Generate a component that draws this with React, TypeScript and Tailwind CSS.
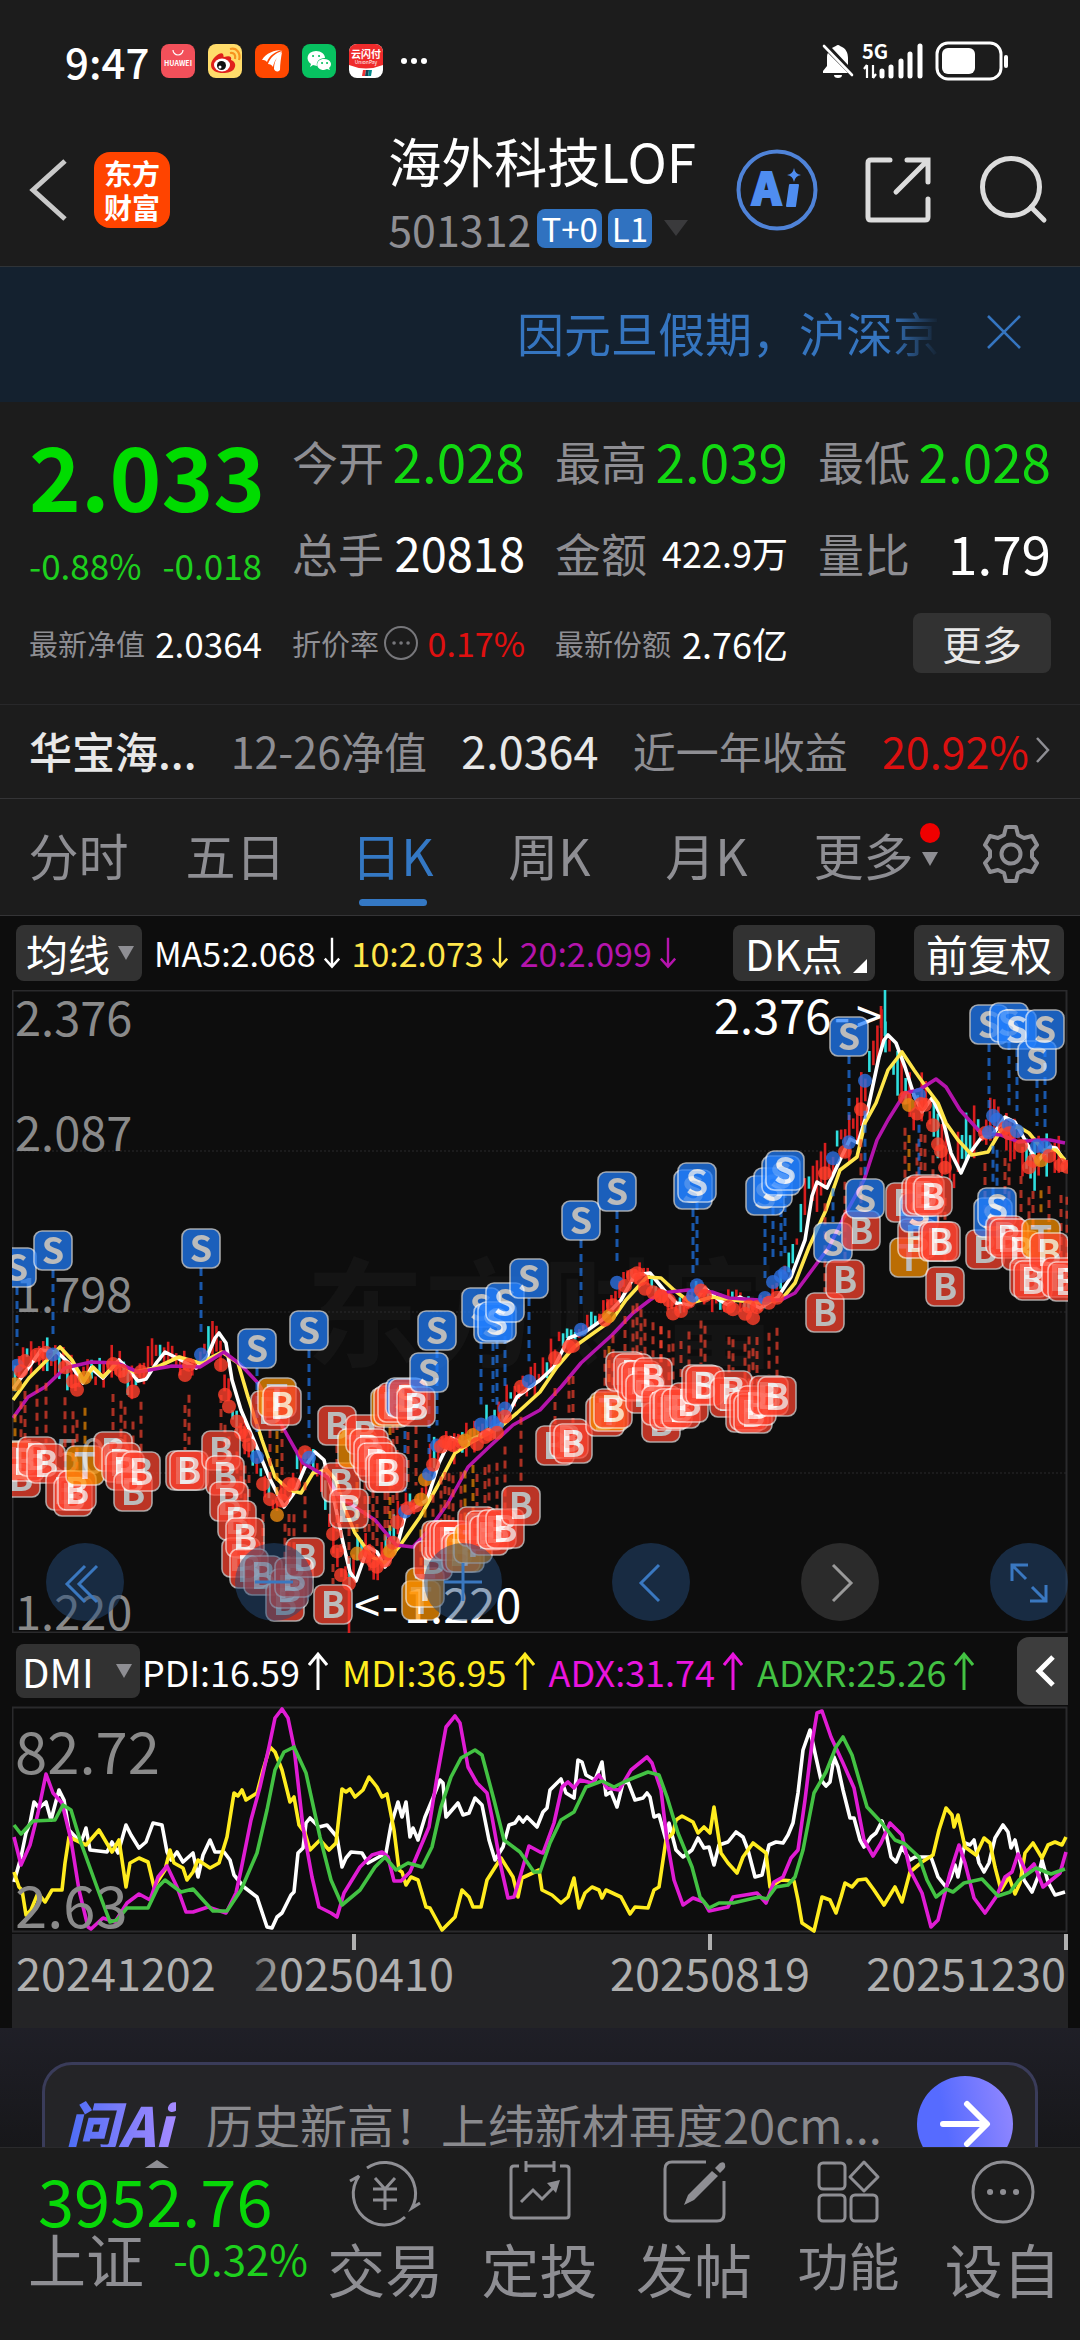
import type { ReactNode } from 'react';

type Point = [number, number];

const toPoints = (s: string): Point[] =>
  s.split(' ').map((p) => p.split(',').map(Number) as Point);

// moving averages
const MA5 = '13,1389 29,1367 41,1350 57,1352 71,1365 83,1383 91,1368 103,1378 119,1360 129,1370 138,1381 146,1379 157,1362 165,1352 177,1358 196,1368 207,1357 215,1338 219,1333 226,1343 232,1380 241,1410 255,1443 269,1477 284,1507 294,1493 305,1467 315,1452 324,1460 334,1500 344,1547 350,1572 356,1581 368,1547 377,1552 385,1567 396,1550 406,1513 427,1500 439,1463 451,1438 463,1443 477,1437 492,1428 504,1422 517,1397 540,1380 554,1367 569,1338 585,1332 602,1320 621,1300 635,1275 650,1273 664,1290 676,1303 691,1305 705,1288 719,1300 728,1305 740,1297 760,1308 778,1297 791,1277 805,1240 812,1196 817,1182 827,1188 840,1160 850,1139 858,1143 867,1113 879,1057 884,1040 888,1035 896,1043 905,1067 914,1095 922,1112 932,1098 943,1120 951,1153 961,1173 970,1153 981,1138 994,1133 1005,1117 1015,1122 1025,1140 1037,1162 1050,1147 1056,1148 1065,1162';
const MA10 = '13,1400 29,1378 45,1362 60,1347 72,1360 84,1381 93,1367 103,1377 117,1363 134,1372 155,1368 179,1357 200,1363 222,1352 238,1363 248,1397 262,1440 275,1477 289,1490 301,1493 313,1473 327,1470 336,1480 344,1507 355,1533 372,1557 384,1563 399,1547 420,1517 437,1487 455,1453 472,1442 499,1428 517,1413 540,1392 557,1367 574,1347 595,1332 612,1320 626,1300 647,1277 661,1278 674,1290 691,1303 712,1297 733,1300 760,1303 781,1300 795,1283 809,1247 826,1210 840,1170 857,1157 865,1123 876,1103 888,1070 902,1052 914,1070 926,1087 938,1103 946,1123 958,1140 972,1155 988,1152 1001,1130 1019,1127 1029,1133 1043,1150 1056,1150 1065,1160';
const MA20 = '13,1418 28,1397 45,1387 65,1368 91,1362 117,1363 138,1372 172,1366 200,1367 224,1352 241,1365 258,1383 272,1407 286,1433 303,1463 327,1477 339,1497 355,1507 375,1520 396,1545 413,1547 429,1530 448,1503 468,1467 489,1447 513,1425 540,1410 561,1387 581,1363 612,1335 633,1313 650,1300 661,1293 688,1290 712,1292 729,1298 760,1300 781,1300 795,1293 812,1270 829,1247 846,1213 864,1180 877,1140 888,1120 905,1093 919,1090 936,1079 946,1087 960,1110 981,1133 1001,1135 1019,1142 1036,1140 1050,1140 1065,1143';

// DMI
const PDI = '14,1882 21,1857 26,1833 30,1823 34,1802 39,1808 46,1802 51,1820 59,1790 64,1800 69,1830 81,1843 86,1828 90,1850 107,1852 112,1842 118,1853 126,1825 131,1835 139,1848 146,1842 153,1823 162,1825 167,1852 171,1860 177,1852 183,1862 193,1853 198,1877 203,1855 210,1840 215,1852 224,1852 230,1860 234,1875 244,1887 257,1897 267,1927 272,1928 277,1917 282,1913 291,1895 294,1892 298,1853 303,1848 306,1823 310,1818 319,1827 327,1825 337,1837 342,1867 346,1858 351,1852 362,1853 368,1863 386,1853 391,1825 398,1802 402,1817 406,1802 410,1837 413,1828 418,1840 425,1817 433,1798 440,1780 443,1783 446,1817 458,1803 463,1815 469,1813 475,1798 482,1805 489,1840 495,1860 503,1847 509,1825 515,1823 519,1817 523,1822 527,1817 537,1827 543,1812 547,1808 550,1790 561,1779 566,1793 574,1798 578,1760 582,1762 586,1775 595,1780 602,1762 606,1795 611,1792 617,1807 623,1783 628,1782 635,1800 643,1798 647,1793 650,1797 654,1817 659,1815 666,1840 669,1823 676,1850 683,1857 692,1850 698,1838 704,1848 709,1847 714,1865 719,1845 728,1842 736,1832 743,1837 748,1850 755,1877 762,1875 769,1845 776,1842 783,1843 788,1835 793,1823 798,1793 803,1750 810,1730 815,1753 821,1780 826,1786 830,1782 834,1757 838,1767 843,1790 850,1818 854,1818 860,1840 864,1847 871,1837 876,1833 882,1821 886,1833 891,1857 896,1862 902,1847 910,1860 915,1857 931,1857 938,1877 946,1887 951,1877 955,1865 958,1877 965,1843 970,1845 974,1840 979,1863 984,1872 989,1863 995,1838 1003,1825 1008,1832 1011,1848 1015,1840 1019,1857 1024,1880 1032,1892 1038,1877 1042,1860 1048,1882 1055,1895 1065,1892';
const MDI = '14,1872 19,1887 22,1890 26,1915 31,1910 38,1893 45,1902 52,1890 62,1890 65,1863 69,1837 86,1845 99,1830 112,1852 119,1840 122,1860 126,1887 130,1863 139,1858 148,1862 154,1887 165,1870 170,1850 174,1863 183,1868 187,1880 193,1872 198,1860 210,1868 219,1863 227,1837 234,1793 238,1796 242,1790 246,1800 257,1793 263,1770 270,1747 275,1752 282,1770 290,1802 294,1797 299,1825 305,1833 310,1850 320,1840 329,1850 336,1843 342,1789 346,1792 350,1789 355,1797 363,1790 369,1777 377,1787 382,1797 387,1794 394,1830 399,1870 402,1872 406,1885 411,1877 418,1880 426,1907 430,1908 442,1930 455,1917 462,1890 469,1897 473,1907 481,1907 487,1880 501,1858 513,1877 518,1897 522,1878 539,1870 542,1890 552,1895 561,1903 568,1897 574,1878 579,1908 585,1893 592,1887 599,1890 602,1898 606,1890 621,1897 630,1914 635,1907 648,1908 654,1890 659,1887 666,1840 673,1833 676,1820 682,1816 693,1822 698,1833 704,1827 710,1833 714,1807 721,1853 728,1863 737,1873 743,1857 753,1843 766,1853 770,1887 781,1880 794,1881 798,1900 802,1923 814,1931 822,1897 830,1900 836,1913 841,1897 845,1883 852,1887 858,1880 866,1879 874,1890 884,1905 895,1887 902,1902 910,1872 922,1862 933,1855 939,1830 946,1808 952,1815 954,1827 958,1815 965,1847 976,1855 984,1838 990,1843 995,1867 1001,1890 1009,1877 1015,1894 1020,1883 1025,1853 1033,1843 1042,1858 1048,1845 1055,1842 1062,1845 1066,1837';
const ADX = '14,1837 21,1865 30,1845 38,1813 46,1774 53,1793 62,1803 71,1840 79,1890 88,1927 91,1929 103,1918 115,1922 127,1903 139,1894 150,1900 158,1877 167,1866 177,1887 186,1912 193,1912 208,1907 226,1913 236,1893 241,1870 251,1820 260,1787 269,1747 275,1718 282,1709 288,1718 294,1747 303,1827 312,1877 319,1907 331,1913 337,1917 344,1893 360,1867 372,1855 382,1852 388,1857 394,1881 401,1881 410,1872 418,1853 429,1827 437,1777 446,1727 455,1716 460,1723 468,1767 477,1783 487,1793 492,1817 501,1867 508,1898 514,1897 520,1877 529,1846 540,1852 543,1853 554,1823 562,1787 568,1782 574,1788 580,1780 592,1783 599,1775 607,1788 619,1790 631,1770 647,1757 652,1763 661,1790 667,1840 674,1880 683,1905 693,1898 704,1902 709,1911 728,1907 733,1897 757,1893 766,1903 774,1882 783,1877 791,1858 798,1850 805,1800 812,1743 817,1713 822,1711 831,1737 843,1763 854,1788 864,1840 873,1856 881,1843 890,1823 902,1835 910,1870 922,1893 931,1927 938,1920 950,1873 959,1845 965,1863 974,1898 985,1913 996,1897 1005,1877 1012,1872 1018,1854 1026,1872 1034,1864 1043,1887 1060,1873 1066,1852';
const ADXR = '14,1825 21,1834 33,1821 55,1820 63,1805 71,1810 81,1843 98,1890 110,1922 117,1920 127,1908 148,1908 158,1887 165,1880 181,1892 193,1889 203,1900 213,1911 227,1911 241,1890 257,1853 267,1810 275,1770 284,1752 294,1747 306,1773 320,1837 331,1880 342,1905 360,1890 375,1867 385,1857 396,1870 408,1863 422,1867 432,1847 441,1807 451,1777 461,1758 475,1750 482,1755 494,1800 504,1840 520,1852 534,1872 540,1872 550,1843 561,1820 574,1812 586,1787 602,1781 614,1787 626,1781 648,1772 659,1775 667,1797 678,1833 692,1867 700,1897 709,1908 719,1903 733,1903 759,1897 767,1899 776,1887 788,1885 795,1877 803,1850 814,1793 826,1772 836,1747 843,1737 852,1755 867,1807 881,1822 895,1840 905,1844 919,1857 927,1880 936,1897 946,1889 953,1892 964,1883 982,1879 998,1896 1010,1892 1019,1880 1036,1868 1051,1874 1065,1869';

const SELLS = toPoints('17,1267 53,1250 201,1248 257,1348 309,1330 437,1330 429,1372 481,1307 493,1323 497,1321 505,1302 529,1278 581,1220 617,1191 693,1189 697,1182 765,1195 773,1187 781,1175 785,1170 849,1036 833,1242 989,1024 1009,1022 1017,1029 1037,1060 1045,1029 919,1212 993,1217 997,1207 865,1198 405,1397');
const HOLDS = toPoints('15,1460 85,1465 277,1397 357,1448 390,1407 425,1587 421,1600 465,1552 473,1543 609,1411 909,1257 1041,1238');
const BUYS = toPoints('21,1477 25,1461 37,1456 46,1463 65,1490 73,1496 77,1490 113,1451 121,1462 125,1470 133,1491 141,1471 185,1470 189,1470 221,1450 225,1475 229,1501 237,1520 245,1537 241,1557 249,1568 263,1575 285,1601 289,1588 294,1577 305,1557 333,1604 270,1410 282,1405 337,1425 341,1482 349,1508 365,1434 369,1448 373,1456 377,1462 385,1472 388,1472 393,1405 397,1402 408,1398 416,1406 433,1560 441,1540 445,1540 449,1540 453,1540 461,1552 477,1526 485,1530 489,1535 497,1529 505,1528 521,1505 555,1445 569,1438 573,1443 605,1416 613,1408 625,1371 633,1373 637,1381 641,1380 653,1377 645,1393 661,1422 661,1405 669,1410 673,1408 681,1408 689,1402 701,1384 705,1385 729,1397 733,1390 745,1412 749,1410 753,1413 757,1405 769,1395 777,1396 825,1312 845,1279 861,1230 905,1202 917,1238 921,1196 925,1194 933,1196 938,1241 941,1241 945,1286 985,1249 1005,1235 1009,1238 1021,1250 1029,1277 1033,1280 1049,1252 1061,1277 1067,1281');

const ma5Points = toPoints(MA5);

// price leads the 5-day average by about two bars
const priceAt = (x: number) => {
  const t = x + 8;
  const i = ma5Points.findIndex((p) => p[0] >= t);
  if (i < 0) return ma5Points[ma5Points.length - 1][1];
  if (i === 0) return ma5Points[0][1];
  const [x0, y0] = ma5Points[i - 1];
  const [x1, y1] = ma5Points[i];
  return y0 + ((y1 - y0) * (t - x0)) / (x1 - x0);
};

const noise = (n: number) => {
  const v = Math.sin(n * 127.1 + 11.7) * 43758.5453;
  return v - Math.floor(v);
};

const candles = Array.from({ length: 261 }, (_, i) => {
  const x = 15 + i * 4.03;
  const volatile = x > 800 ? 24 : x > 560 ? 7 : 14;
  const half = 3 + noise(i) * volatile;
  const mid = priceAt(x) + (noise(i + 500) - 0.5) * volatile;
  return { x, y1: mid - half, y2: mid + half, up: noise(i + 900) > 0.32 };
});
candles.push({ x: 885, y1: 990, y2: 1036, up: false });
candles.push({ x: 881, y1: 1006, y2: 1028, up: true });
candles.push({ x: 349, y1: 1585, y2: 1633, up: true });

const MARKS = {
  S: { color: '#217fff', dot: '#2d6fe0' },
  T: { color: '#ff9200', dot: '#e88a10' },
  B: { color: '#ff432f', dot: '#ff402c' },
};
type MarkKind = keyof typeof MARKS;
type MarkProps = { kind: MarkKind; x: number; y: number };

const withKind = (kind: MarkKind, points: Point[]): MarkProps[] => points.map(([x, y]) => ({ kind, x, y }));
const marks = [...withKind('S', SELLS), ...withKind('T', HOLDS), ...withKind('B', BUYS)].sort((a, b) => a.x - b.x);

const Mark = ({ kind, x, y }: MarkProps) => (
  <g opacity="0.72">
    <rect x={x - 19} y={y - 19} width="38" height="39" rx="8" fill={MARKS[kind].color} stroke="#fff" strokeOpacity="0.85" strokeWidth="1.6" />
    <text x={x} y={y + 14} textAnchor="middle" fontSize="36" fontWeight="700" fill="#fff">{kind}</text>
  </g>
);

const MarkTrail = ({ kind, x, y }: MarkProps) => {
  const sell = kind === 'S';
  const dotY = priceAt(x) + (noise(x) - 0.5) * 16 + (sell ? -3 : 5);
  const above = y < dotY;
  return (
    <g>
      <line
        x1={x} x2={x}
        y1={above ? y + 20 : dotY + 30}
        y2={above ? Math.max(dotY - 20, y + 20) : Math.max(y - 20, dotY + 30)}
        stroke={MARKS[kind].color} strokeOpacity="0.65" strokeWidth="3" strokeDasharray="8 6"
      />
      <circle cx={x} cy={dotY} r="7" fill={MARKS[kind].dot} fillOpacity="0.8" />
    </g>
  );
};

const Line = ({ points, color }: { points: string; color: string }) => (
  <polyline points={points} fill="none" stroke={color} strokeWidth="3.6" strokeLinejoin="round" />
);

const PriceChart = () => (
  <svg viewBox="12 990 1056 643" className="block w-full" role="img" aria-label="日K">
    <text x="306" y="1358" fontSize="118" fontWeight="700" fill="#141414">东方财富</text>
    <rect x="12.5" y="990.5" width="1054" height="642" fill="none" stroke="#2a2a2c" strokeWidth="2" />
    {[1151, 1312, 1473].map((y) => (
      <line key={y} x1="12" x2="1067" y1={y} y2={y} stroke="#2a2a2c" strokeDasharray="2 2" />
    ))}
    <g fontSize="47" fill="#8a8a8a">
      <text x="15" y="1036">2.376</text>
      <text x="15" y="1151">2.087</text>
      <text x="15" y="1312">1.798</text>
      <text x="15" y="1473">1.509</text>
      <text x="15" y="1630">1.220</text>
    </g>
    {candles.map((c, i) => (
      <line key={i} x1={c.x} x2={c.x} y1={c.y1} y2={c.y2} stroke={c.up ? '#d81e1e' : '#2fdede'} strokeWidth="2.6" />
    ))}
    <Line points={MA5} color="#fff" />
    <Line points={MA10} color="#ffe64b" />
    <Line points={MA20} color="#b414ac" />
    <g fontSize="47" fill="#fff">
      <text x="714" y="1034">2.376</text>
      <text x="354" y="1623">{'<'}</text>
      <text x="382" y="1623">-</text>
      <text x="404" y="1623">1.220</text>
      <text x="834" y="1034">-</text>
      <text x="856" y="1034">{'>'}</text>
    </g>
    {marks.map((m, i) => <MarkTrail key={i} {...m} />)}
    {marks.map((m, i) => <Mark key={i} {...m} />)}
  </svg>
);

const DmiChart = () => (
  <svg viewBox="12 1706 1056 322" className="block w-full" role="img" aria-label="DMI">
    <defs>
      <linearGradient id="dateFade" x1="0" x2="1" y1="0" y2="0">
        <stop offset="0" stopColor="#6c6c6d" />
        <stop offset="0.16" stopColor="#b0b0b0" />
      </linearGradient>
    </defs>
    <rect x="12.5" y="1707.5" width="1054" height="224" fill="none" stroke="#2a2a2c" strokeWidth="2" />
    <Line points={PDI} color="#fff" />
    <Line points={MDI} color="#ffec1f" />
    <Line points={ADX} color="#e01cd4" />
    <Line points={ADXR} color="#43c243" />
    <g fontSize="58" fill="#8a8a8a">
      <text x="15" y="1774">82.72</text>
      <text x="15" y="1928">2.63</text>
    </g>
    <rect x="12" y="1934" width="1056" height="94" fill="#242426" />
    {[354, 710, 1066].map((x) => (
      <line key={x} x1={x} x2={x} y1="1934" y2="1950" stroke="#b0b0b0" strokeWidth="4" />
    ))}
    <g fontSize="45" fill="#b0b0b0">
      <text x="16" y="1991">20241202</text>
      <text x="354" y="1991" textAnchor="middle" fill="url(#dateFade)">20250410</text>
      <text x="710" y="1991" textAnchor="middle">20250819</text>
      <text x="1066" y="1991" textAnchor="end">20251230</text>
    </g>
  </svg>
);

const StatusBar = () => (
  <div className="flex items-center pt-[39px] pr-[70px] pl-[65px]">
    <span className="text-[42px] leading-[44px] font-medium">9:47</span>
    <div className="ml-3 flex items-center gap-[13px]">
      <svg viewBox="0 0 34 34" className="size-[34px]">
        <rect width="34" height="34" rx="8" fill="#f2505a" />
        <path d="M12 6a5 5 0 0 0 10 0" fill="none" stroke="#fff" strokeWidth="1.2" />
        <text x="17" y="22" fontSize="7" fontWeight="700" fill="#fff" textAnchor="middle">HUAWEI</text>
      </svg>
      <svg viewBox="0 0 34 34" className="size-[34px]">
        <rect width="34" height="34" rx="8" fill="#ffdc6b" />
        <path d="M3 21C3 14 13 7 15 10c1 2 0 3 1 3 6-2 8 0 7 3 5 2 5 6 3 9-4 6-23 6-23-4Z" fill="#e0201c" />
        <ellipse cx="14" cy="21" rx="8" ry="6.500" fill="#fff" />
        <circle cx="13.500" cy="21.500" r="4.500" fill="#111" />
        <circle cx="12" cy="23" r="1.500" fill="#fff" />
        <path d="M22 9c4-1 6 2 5 6M22 5c7-2 11 5 9 11" fill="none" stroke="#f7931e" strokeWidth="2.200" />
      </svg>
      <svg viewBox="0 0 34 34" className="size-[34px]">
        <rect width="34" height="34" rx="8" fill="#ff4800" />
        <path d="M7 16C11 9 19 6 28 6 20 7 14 12 12 18c-2-2-3-2-5-2ZM13 20c2-6 7-11 14-13-4 5-8 10-9 16-1-2-3-3-5-3ZM19 25c0-7 3-13 8-17-1 6-2 12-2 18-3 3-5 1-6-1Z" fill="#fff" />
      </svg>
      <svg viewBox="0 0 34 34" className="size-[34px]">
        <rect width="34" height="34" rx="8" fill="#07c160" />
        <path d="M14 7c5 0 9 3 9 7-6 0-9 4-8 8l-4-1-3 2 1-3c-6-4-4-13 5-13Z" fill="#fff" />
        <path d="M22 15c-9 0-9 11 0 11l3-1 3 1-1-2c4-3 2-9-5-9Z" fill="#fff" />
        <path d="M11 12h.1M17 12h.1M20 19h.1M25 19h.1" stroke="#07c160" strokeWidth="2" strokeLinecap="round" />
      </svg>
      <svg viewBox="0 0 34 34" className="size-[34px]">
        <rect width="34" height="34" rx="8" fill="#fff" />
        <path d="M0 8a8 8 0 0 1 8-8h18a8 8 0 0 1 8 8v13q-17 7-34 0Z" fill="#ef2b2b" />
        <text x="17" y="14" fontSize="10" fontWeight="700" fill="#fff" textAnchor="middle">云闪付</text>
        <text x="17" y="20" fontSize="5" fill="#fff" textAnchor="middle">UnionPay</text>
        <path d="M14 26h3l-1 6h-3Z" fill="#e33" />
        <path d="M17 26h3l-1 6h-3Z" fill="#145" />
        <path d="M20 26h3l-1 6h-3Z" fill="#088" />
      </svg>
    </div>
    <svg viewBox="0 0 28 8" className="ml-[17px] h-2 w-7" fill="#fff">
      <circle cx="4" cy="4" r="3" /><circle cx="14" cy="4" r="3" /><circle cx="24" cy="4" r="3" />
    </svg>
    <svg viewBox="0 0 32 36" className="ml-auto h-9 w-8" fill="#fff">
      <path d="M10 5c2-1 3-2 4-2a2.500 2.500 0 0 1 4 0c6 2 8 7 8 12v7l-16-17ZM6 10l20 20H1v-2l4-5v-8c0-2 0-4 1-5ZM12 32h8a4 3 0 0 1-8 0Z" />
      <path d="M2 3l28 29" stroke="#fff" strokeWidth="2.600" strokeLinecap="round" />
    </svg>
    <svg viewBox="0 0 64 38" className="ml-2 h-[38px] w-16" fill="#fff">
      <text x="0" y="17" fontSize="20" fontWeight="700">5G</text>
      <path d="M5 23v13M5 23l-3 4M11 23v13M11 36l3-4" stroke="#fff" strokeWidth="2.200" fill="none" />
      <path d="M20 34v-5M29 34v-9M39 34V19M48 34V12M58 34V4" stroke="#fff" strokeWidth="5" strokeLinecap="round" />
    </svg>
    <svg viewBox="0 0 76 40" className="ml-2 h-10 w-[76px]">
      <rect x="3" y="2" width="64" height="36" rx="11" fill="none" stroke="#fff" strokeWidth="3" />
      <rect x="8" y="7" width="33" height="26" rx="6" fill="#fff" />
      <path d="M72 16v9" stroke="#fff" strokeWidth="4" strokeLinecap="round" />
    </svg>
  </div>
);

const Header = () => (
  <header className="flex items-center border-b border-[#2f3337] pt-[47px] pr-8 pb-4 pl-7">
    <button aria-label="返回">
      <svg viewBox="0 0 40 64" className="h-16 w-10" fill="none" stroke="#c9c9c9" strokeWidth="5">
        <path d="M37 3 5 32l32 29" />
      </svg>
    </button>
    <span className="ml-[26px] grid size-[76px] place-content-center rounded-2xl bg-[#ff4400] text-[28px] leading-[34px] font-bold">
      <span>东方</span>
      <span>财富</span>
    </span>
    <div className="ml-auto flex flex-col gap-4">
      <h1 className="text-[53px] leading-[60px]">海外科技LOF</h1>
      <div className="flex items-center text-[43px] leading-[44px] text-[#8e8e93]">
        501312
        <span className="ml-1.5 rounded-lg bg-[#3072c0] px-1 text-[33px] leading-[39px] text-white">T+0</span>
        <span className="ml-1.5 rounded-lg bg-[#3072c0] px-1 text-[33px] leading-[39px] text-white">L1</span>
        <svg viewBox="0 0 24 16" className="ml-3 h-4 w-6" fill="#3a3a3c"><path d="M0 0h24L12 16Z" /></svg>
      </div>
    </div>
    <button className="ml-10" aria-label="Ai">
      <svg viewBox="0 0 82 82" className="size-[82px]">
        <circle cx="41" cy="41" r="38.500" fill="none" stroke="#4f83d8" strokeWidth="4" />
        <text x="16" y="56" fontSize="44" fontWeight="900" fill="#4f8df0" stroke="#4f8df0" strokeWidth="2">A</text>
        <path d="M54 36h8l-3 21h-8Z" fill="#4f8df0" stroke="#4f8df0" strokeWidth="2" strokeLinejoin="round" />
        <path d="M58 19q1 6 7 7-6 1-7 7-1-6-7-7 6-1 7-7Z" fill="#4f8df0" />
      </svg>
    </button>
    <button className="ml-[46px]" aria-label="分享">
      <svg viewBox="0 0 68 68" className="size-[68px]" fill="none" stroke="#dcdcdc" strokeWidth="5" strokeLinecap="round">
        <path d="M26 4H7q-3 0-3 3v54q0 3 3 3h54q3 0 3-3V43M43 4h21v22M62 6 32 36" />
      </svg>
    </button>
    <button className="ml-12" aria-label="搜索">
      <svg viewBox="0 0 68 68" className="size-[68px]" fill="none" stroke="#dcdcdc" strokeWidth="5" strokeLinecap="round">
        <circle cx="31" cy="31" r="28.500" /><path d="m51 51 13 13" />
      </svg>
    </button>
  </header>
);

const Notice = () => (
  <div className="flex items-center justify-end bg-[#14212f] pt-[35px] pr-[58px] pb-10 text-[#3575c0]">
    <p className="overflow-hidden bg-linear-to-r from-[#3575c0] from-88% to-[#14212f] bg-clip-text text-[47px] leading-[60px] whitespace-nowrap text-transparent">
      因元旦假期，沪深京
    </p>
    <button className="ml-[46px]" aria-label="关闭">
      <svg viewBox="0 0 36 36" className="size-9" fill="none" stroke="#3575c0" strokeWidth="2.600">
        <path d="m2 2 32 32M34 2 2 34" />
      </svg>
    </button>
  </div>
);

const Stat = ({ label, small, children }: { label: ReactNode; small?: boolean; children: ReactNode }) => (
  <div className="flex items-center justify-between leading-[60px] whitespace-nowrap">
    <span className={small ? 'flex items-center text-[29px] text-[#8e8e93]' : 'text-[46px] text-[#8e8e93]'}>{label}</span>
    {children}
  </div>
);

const Quote = () => (
  <section className="grid grid-cols-4 gap-x-[30px] gap-y-[31px] border-b border-[#28282a] px-[29px] pt-7 pb-[31px]">
    <div className="row-span-2 text-[#00dc00]">
      <div className="text-[88px] leading-[88px] font-bold">2.033</div>
      <div className="mt-[30px] flex justify-between text-[35px] leading-[34px] text-[#1ed01e]">
        <span>-0.88%</span>
        <span>-0.018</span>
      </div>
    </div>
    <Stat label="今开"><span className="text-[53px] text-[#12d812]">2.028</span></Stat>
    <Stat label="最高"><span className="text-[53px] text-[#12d812]">2.039</span></Stat>
    <Stat label="最低"><span className="text-[53px] text-[#12d812]">2.028</span></Stat>
    <Stat label="总手"><span className="text-[47px]">20818</span></Stat>
    <Stat label="金额"><span className="text-[36px]">422.9万</span></Stat>
    <Stat label="量比"><span className="text-[53px]">1.79</span></Stat>
    <Stat small label="最新净值"><span className="text-[35px]">2.0364</span></Stat>
    <Stat
      small
      label={
        <>
          折价率
          <svg viewBox="0 0 36 36" className="ml-1 size-9" fill="none" stroke="#77777b" strokeWidth="2">
            <circle cx="18" cy="18" r="16" />
            <path d="M11 18h.1M18 18h.1M25 18h.1" strokeWidth="3.500" strokeLinecap="round" />
          </svg>
        </>
      }
    >
      <span className="text-[34px] text-[#e01010]">0.17%</span>
    </Stat>
    <Stat small label="最新份额"><span className="text-[36px]">2.76亿</span></Stat>
    <button className="ml-auto w-[138px] rounded-lg bg-[#323232] text-[40px] leading-[60px] text-[#e8e8e8]">更多</button>
  </section>
);

const FundRow = () => (
  <a href="#fund" className="flex items-center justify-between border-b border-[#343436] px-[29px] pt-[15px] pb-[18px] text-[43px] leading-[60px] whitespace-nowrap text-[#8e8e93]">
    <span className="font-medium text-[#e8e8e8]">华宝海...</span>
    <span>12-26净值</span>
    <span className="text-[45px] text-[#e8e8e8]">2.0364</span>
    <span>近一年收益</span>
    <span className="flex items-center gap-1.5 text-[#dc1010]">
      20.92%
      <svg viewBox="0 0 16 28" className="h-7 w-4" fill="none" stroke="#8e8e93" strokeWidth="2.500">
        <path d="m2 2 11 12L2 26" />
      </svg>
    </span>
  </a>
);

const Tabs = () => (
  <nav className="flex border-b border-[#343436] pt-[25px] pb-[31px] text-[50px] leading-[60px] text-[#8e8e93]">
    {['分时', '五日', '日K', '周K', '月K'].map((tab) => (
      <button key={tab} className={tab === '日K' ? 'relative w-[157px] text-[#3478c4]' : 'w-[157px]'}>
        {tab}
        {tab === '日K' && <span className="absolute -bottom-[22px] left-1/2 h-[7px] w-[68px] -translate-x-1/2 rounded-full bg-[#3478c4]" />}
      </button>
    ))}
    <button className="relative w-[157px]">
      更多
      <span className="absolute -top-px right-[2px] size-5 rounded-full bg-[#f00000]" />
      <svg viewBox="0 0 16 14" className="absolute top-7 right-1 h-3.5 w-4" fill="#8e8e93"><path d="M0 0h16L8 14Z" /></svg>
    </button>
    <button className="flex flex-1 items-center justify-center" aria-label="设置">
      <svg viewBox="0 0 60 60" className="size-[60px]" fill="none" stroke="#8e8e93" strokeWidth="4" strokeLinejoin="round">
        <path d="M25 3h10l2 8 6 3 8-2 5 9-5 6v6l5 6-5 9-8-2-6 3-2 8H25l-2-8-6-3-8 2-5-9 5-6v-6l-5-6 5-9 8 2 6-3Z" />
        <circle cx="30" cy="30" r="9.500" />
      </svg>
    </button>
  </nav>
);

const Arrow = ({ up }: { up?: boolean }) => (
  <svg viewBox="0 0 20 40" className={up ? 'ml-2 h-10 w-5' : 'ml-1.5 h-8 w-5'} fill="none" stroke="currentColor" strokeWidth="3">
    <path d={up ? 'M10 39V3M1 14l9-11 9 11' : 'M10 1v36M1 27l9 10 9-10'} />
  </svg>
);

const Caret = () => (
  <svg viewBox="0 0 16 14" className="pointer-events-none absolute top-1/2 right-2 h-3.5 w-4 -translate-y-1/2" fill="#8e8e93">
    <path d="M0 0h16L8 14Z" />
  </svg>
);

const AverageRow = () => (
  <div className="flex items-center px-4 py-[9px] text-[34px] leading-[56px] whitespace-nowrap">
    <label className="relative">
      <select aria-label="均线" className="block h-[56px] w-[126px] appearance-none rounded-lg bg-[#323232] pl-2.5 text-[42px] leading-[56px]">
        <option>均线</option>
      </select>
      <Caret />
    </label>
    <span className="ml-3 flex items-center">MA5:2.068<Arrow /></span>
    <span className="ml-2.5 flex items-center text-[#ffe64b]">10:2.073<Arrow /></span>
    <span className="ml-2.5 flex items-center text-[#b414ac]">20:2.099<Arrow /></span>
    <button className="relative ml-auto w-[142px] rounded-lg bg-[#323232] pl-3 text-left text-[42px]">
      DK点
      <svg viewBox="0 0 14 14" className="absolute right-2 bottom-2 size-3.5" fill="#fff"><path d="M14 0v14H0Z" /></svg>
    </button>
    <button className="ml-[39px] w-[150px] rounded-lg bg-[#323232] text-[42px]">前复权</button>
  </div>
);

const CONTROLS = [
  { name: '最早', d: 'M39 23 21 41l18 18M51 23 33 41l18 18' },
  { name: '缩小', d: 'M20 39h38' },
  { name: '放大', d: 'M20 39h38M39 20v38' },
  { name: '左移', d: 'M47 22 29 40l18 18' },
  { name: '右移', d: 'M32 22l18 18-18 18' },
  { name: '全屏', d: 'M22 38V22h16M22 22l14 14M56 42v16H40M56 58 42 44' },
];

const ChartControls = () => (
  <div className="absolute inset-x-0 bottom-3 flex justify-between pl-[34px]">
    {CONTROLS.map((c) => (
      <button
        key={c.name}
        aria-label={c.name}
        className={c.name === '右移' ? 'size-[78px] rounded-full bg-[#2b2b2b] text-[#9a9a9a]' : 'size-[78px] rounded-full bg-[#234a78]/50 text-[#3a78c0]'}
      >
        <svg viewBox="0 0 78 78" className="size-[78px]" fill="none" stroke="currentColor" strokeWidth="3">
          <path d={c.d} />
        </svg>
      </button>
    ))}
  </div>
);

const DmiRow = () => (
  <div className="flex items-center pt-1 pb-px pl-1 text-[36px] leading-[54px] whitespace-nowrap">
    <label className="relative">
      <select aria-label="DMI" className="block h-[54px] w-[124px] appearance-none rounded-lg bg-[#323232] pl-1.5 text-[40px] leading-[54px]">
        <option>DMI</option>
      </select>
      <Caret />
    </label>
    <span className="ml-0.5 flex items-center">PDI:16.59<Arrow up /></span>
    <span className="ml-3.5 flex items-center text-[#ffec1f]">MDI:36.95<Arrow up /></span>
    <span className="ml-3.5 flex items-center text-[#ea14de]">ADX:31.74<Arrow up /></span>
    <span className="ml-3.5 flex items-center text-[#43c243]">ADXR:25.26<Arrow up /></span>
    <button className="ml-auto flex h-[68px] w-[51px] items-center justify-center rounded-l-xl bg-[#3d3d3d]" aria-label="展开">
      <svg viewBox="0 0 20 34" className="ml-1 h-[34px] w-5" fill="none" stroke="#fff" strokeWidth="5"><path d="M18 3 4 17l14 14" /></svg>
    </button>
  </div>
);

const AskBar = () => (
  <section className="h-[119px] overflow-hidden bg-linear-to-b from-[#1f1f27] to-[#17171a] pt-[34px]">
    <a href="#ask" className="mx-[42px] flex h-[124px] items-center rounded-[30px] border-3 border-[#3a3c5a] bg-[#242427] pr-[22px] pl-5 text-[47px] leading-[60px] whitespace-nowrap text-[#8a8a8e]">
      <span className="bg-linear-to-r from-[#4a6cf5] to-[#a58aff] bg-clip-text pr-1 text-[54px] font-black text-transparent italic">问Ai</span>
      <span className="ml-[30px] min-w-0 flex-1">历史新高！上纬新材再度20cm...</span>
      <svg viewBox="0 0 96 96" className="size-24 shrink-0">
        <defs>
          <linearGradient id="go" x1="0" x2="1" y1="0.6" y2="0.4">
            <stop offset="0.3" stopColor="#566bff" />
            <stop offset="1" stopColor="#8f86ff" />
          </linearGradient>
        </defs>
        <circle cx="48" cy="48" r="48" fill="url(#go)" />
        <path d="M26 48h42M50 28l20 20-20 20" fill="none" stroke="#fff" strokeWidth="6" strokeLinecap="round" strokeLinejoin="round" />
      </svg>
    </a>
  </section>
);

const NAV: { label: string; icon: ReactNode }[] = [
  {
    label: '交易',
    icon: (
      <>
        <path d="M16 10A31 31 0 0 1 61 50l8-5M54 59A31 31 0 0 1 8 18l-9 5" />
        <path d="m24 20 10 11 10-11M22 31h24M22 42h24M34 31v21" />
      </>
    ),
  },
  {
    label: '定投',
    icon: (
      <>
        <path d="M13 8H8q-3 0-3 3v46q0 3 3 3h52q3 0 3-3V11q0-3-3-3h-6M20 3v11M48 3v11M20 8h28" />
        <path d="m15 44 12-12 9 9 14-14" />
        <path d="m41 25 13-3-4 13Z" fill="currentColor" stroke="none" />
      </>
    ),
  },
  {
    label: '发帖',
    icon: (
      <>
        <path d="M46 4H12q-7 0-7 7v45q0 7 7 7h45q7 0 7-7V23" />
        <path d="m52 13 6 5-24 24-10 5 4-10Z" fill="currentColor" stroke="none" />
        <path d="m55 10 5-5q4-2 5 1t-1 5l-4 4Z" fill="currentColor" stroke="none" />
      </>
    ),
  },
  {
    label: '功能',
    icon: (
      <>
        <rect x="5" y="5" width="26" height="26" rx="4" />
        <rect x="5" y="37" width="26" height="26" rx="4" />
        <rect x="37" y="37" width="26" height="26" rx="4" />
        <path d="M50 4 64 19 50 33 36 19Z" strokeLinejoin="round" />
      </>
    ),
  },
  {
    label: '设自',
    icon: (
      <>
        <circle cx="34" cy="34" r="30" />
        <path d="M21 34h.1M34 34h.1M47 34h.1" strokeWidth="6" strokeLinecap="round" />
      </>
    ),
  },
];

const BottomNav = () => (
  <footer className="flex flex-1 border-t border-[#2a2a2c] text-[#8e8e93]">
    <a href="#index" className="flex w-[308px] shrink-0 flex-col pt-3 pl-7 whitespace-nowrap">
      <svg viewBox="0 0 24 8" className="ml-[117px] h-2 w-6" fill="#8e8e93"><path d="M0 8 12 0l12 8Z" /></svg>
      <span className="ml-2.5 text-[65px] leading-[62px] text-[#08d808]">3952.76</span>
      <span className="flex items-center justify-between">
        <span className="text-[58px] leading-[56px]">上证</span>
        <span className="text-[42px] leading-[56px] text-[#1ed01e]">-0.32%</span>
      </span>
    </a>
    {NAV.map((item) => (
      <button key={item.label} className="flex flex-1 flex-col items-center pt-2.5 text-[58px] leading-[60px]">
        <svg viewBox="0 0 68 68" className="size-[68px] overflow-visible" fill="none" stroke="currentColor" strokeWidth="3">{item.icon}</svg>
        <span className={item.label === '功能' ? 'mt-2 text-[51px]' : 'mt-3'}>{item.label}</span>
      </button>
    ))}
  </footer>
);

export default function App() {
  return (
    <main className="flex min-h-screen flex-col bg-[#1c1c1c] font-['Noto_Sans_CJK_SC',sans-serif] text-white">
      <StatusBar />
      <Header />
      <Notice />
      <Quote />
      <FundRow />
      <Tabs />
      <section className="bg-[#0d0d0d]">
        <AverageRow />
        <div className="px-3">
          <div className="relative">
            <PriceChart />
            <ChartControls />
          </div>
          <DmiRow />
          <DmiChart />
        </div>
      </section>
      <AskBar />
      <BottomNav />
    </main>
  );
}
